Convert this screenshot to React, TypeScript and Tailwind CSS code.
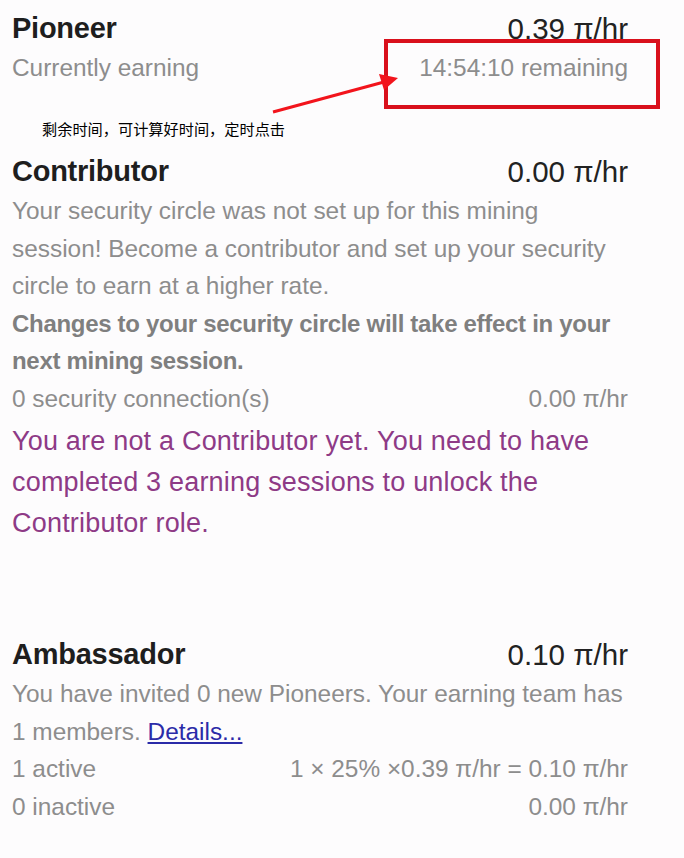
const Rate = ({ value }: { value: string }) => (
    <span className="whitespace-nowrap">{value} π/hr</span>
);

const App = () => {
    return (
        <div className="relative w-[684px] h-[858px] overflow-hidden bg-[#fdfcfd] pl-[12px] pr-[56px] font-['Liberation_Sans',Arial,sans-serif]">
            {/* Pioneer */}
            <div className="pt-[9px]">
                <div className="flex justify-between items-center h-[40px]">
                    <h2 className="text-[29px] font-bold text-[#1e1e1e] tracking-[-0.25px]">Pioneer</h2>
                    <p className="text-[29.5px] text-[#222]"><Rate value="0.39" /></p>
                </div>
                <div className="flex justify-between items-center h-[38px] text-[24.4px] text-[#8d8d8d]">
                    <span>Currently earning</span>
                    <span>14:54:10 remaining</span>
                </div>
            </div>

            {/* Contributor */}
            <div className="mt-[65px]">
                <div className="flex justify-between items-center h-[40px]">
                    <h2 className="text-[29px] font-bold text-[#1e1e1e] tracking-[-0.25px]">Contributor</h2>
                    <p className="text-[29.5px] text-[#222]"><Rate value="0.00" /></p>
                </div>
                <p className="text-[24.4px] leading-[37.5px] text-[#8d8d8d]">
                    Your security circle was not set up for this mining session! Become a contributor and set up your security circle to earn at a higher rate.
                </p>
                <p className="text-[24px] leading-[37.5px] font-bold text-[#7f7f7f] tracking-[-0.3px]">
                    Changes to your security circle will take effect in your next mining session.
                </p>
                <div className="flex justify-between items-center h-[37.5px] mt-[1px] text-[24.4px] text-[#8d8d8d]">
                    <span>0 security connection(s)</span>
                    <Rate value="0.00" />
                </div>
                <p className="mt-[3px] text-[27px] leading-[41px] text-[#8e3a86] tracking-[0.2px]">
                    You are not a Contributor yet. You need to have completed 3 earning sessions to unlock the Contributor role.
                </p>
            </div>

            {/* Ambassador */}
            <div className="mt-[91px]">
                <div className="flex justify-between items-center h-[40px]">
                    <h2 className="text-[29px] font-bold text-[#1e1e1e] tracking-[-0.25px]">Ambassador</h2>
                    <p className="text-[29.5px] text-[#222]"><Rate value="0.10" /></p>
                </div>
                <p className="text-[24.4px] leading-[37.7px] text-[#8d8d8d]">
                    You have invited 0 new Pioneers. Your earning team has 1 members.{" "}
                    <a href="#" className="text-[#2b2ba8] underline underline-offset-2">Details...</a>
                </p>
                <div className="flex justify-between items-center h-[37.7px] text-[24.4px] text-[#8d8d8d]">
                    <span>1 active</span>
                    <span>1 × 25% ×0.39 π/hr = 0.10 π/hr</span>
                </div>
                <div className="flex justify-between items-center h-[37.7px] text-[24.4px] text-[#8d8d8d]">
                    <span>0 inactive</span>
                    <Rate value="0.00" />
                </div>
            </div>

            {/* annotation overlay */}
            <div className="absolute left-[384px] top-[39px] w-[276px] h-[70px] border-[4px] border-[#d9101c]" />
            <svg className="absolute left-0 top-0" width="684" height="160" viewBox="0 0 684 160">
                <line x1="273" y1="112" x2="384" y2="82" stroke="#f2141c" strokeWidth="3" />
                <polygon points="398,78 379,74 384,90" fill="#f2141c" />
            </svg>
            <p className="absolute left-[42px] top-[116px] text-[15.2px] leading-[24px] text-black font-['Noto_Sans_CJK_SC',sans-serif]">
                剩余时间，可计算好时间，定时点击
            </p>
        </div>
    );
};

export default App;
